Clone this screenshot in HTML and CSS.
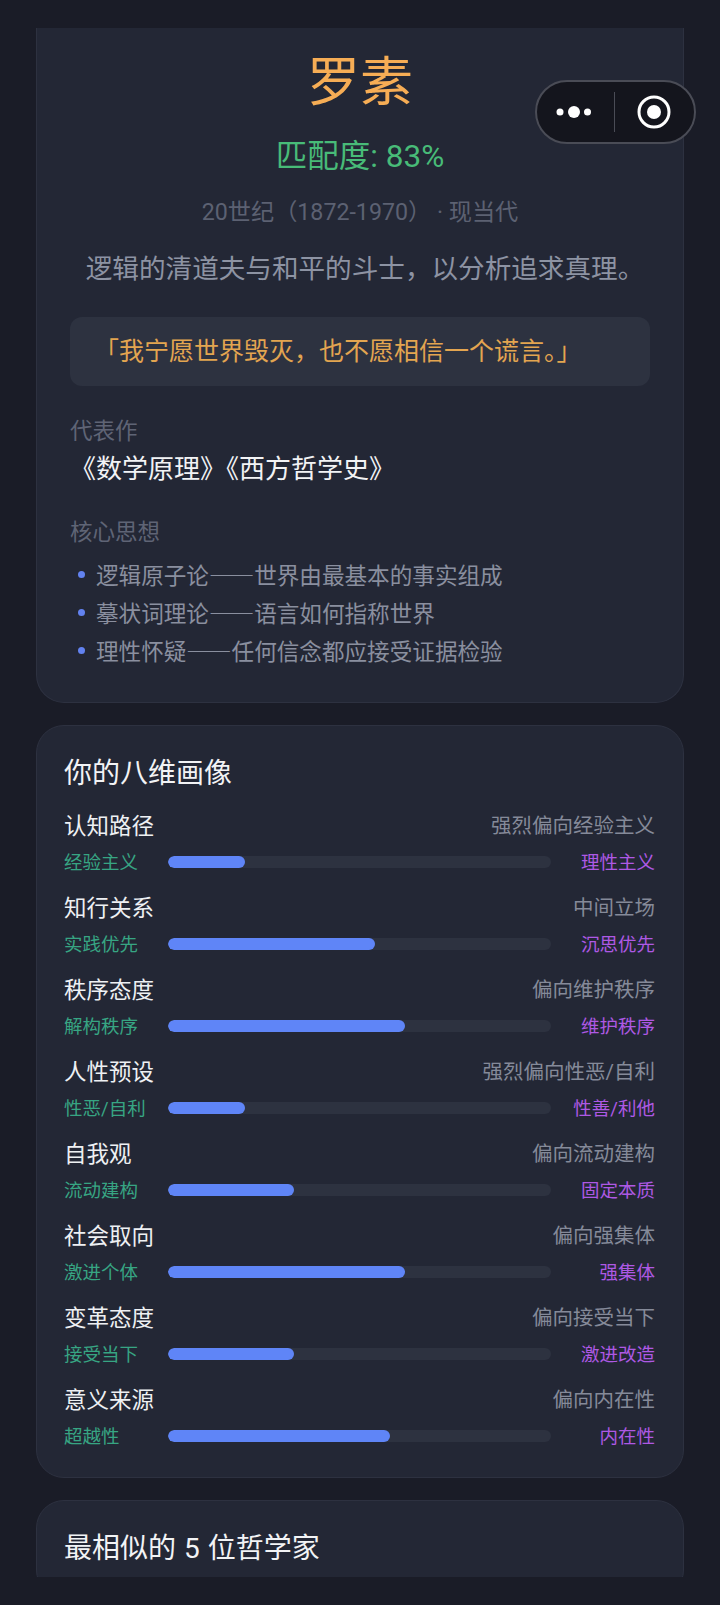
FILE: index.html
```html
<!DOCTYPE html>
<html lang="zh-CN">
<head>
  <meta charset="UTF-8">
  <title>罗素</title>
  <link rel="stylesheet" href="styles.css">
</head>
<body>
  <div id="page">
    <div id="scroller">
      <div class="card card--top">
        <div class="name">罗素</div>
        <div class="match">匹配度: 83%</div>
        <div class="meta">20世纪（1872-1970） · 现当代</div>
        <div class="tagline">逻辑的清道夫与和平的斗士，以分析追求真理。</div>
        <div class="quote">「我宁愿世界毁灭，也不愿相信一个谎言。」</div>
        <div class="sub sub--first">代表作</div>
        <div class="works">《数学原理》《西方哲学史》</div>
        <div class="sub">核心思想</div>
        <ul class="ideas">
          <li>逻辑原子论——世界由最基本的事实组成</li>
          <li>摹状词理论——语言如何指称世界</li>
          <li>理性怀疑——任何信念都应接受证据检验</li>
        </ul>
      </div>

      <div class="card">
        <div class="card-title">你的八维画像</div>
        <div class="dim">
          <div class="dim-head"><span class="dim-name">认知路径</span><span class="dim-value">强烈偏向经验主义</span></div>
          <div class="dim-bar">
            <span class="end-l">经验主义</span>
            <div class="track"><div class="fill" style="width: 20%"></div></div>
            <span class="end-r">理性主义</span>
          </div>
        </div>
        <div class="dim">
          <div class="dim-head"><span class="dim-name">知行关系</span><span class="dim-value">中间立场</span></div>
          <div class="dim-bar">
            <span class="end-l">实践优先</span>
            <div class="track"><div class="fill" style="width: 54%"></div></div>
            <span class="end-r">沉思优先</span>
          </div>
        </div>
        <div class="dim">
          <div class="dim-head"><span class="dim-name">秩序态度</span><span class="dim-value">偏向维护秩序</span></div>
          <div class="dim-bar">
            <span class="end-l">解构秩序</span>
            <div class="track"><div class="fill" style="width: 62%"></div></div>
            <span class="end-r">维护秩序</span>
          </div>
        </div>
        <div class="dim">
          <div class="dim-head"><span class="dim-name">人性预设</span><span class="dim-value">强烈偏向性恶/自利</span></div>
          <div class="dim-bar">
            <span class="end-l">性恶/自利</span>
            <div class="track"><div class="fill" style="width: 20%"></div></div>
            <span class="end-r">性善/利他</span>
          </div>
        </div>
        <div class="dim">
          <div class="dim-head"><span class="dim-name">自我观</span><span class="dim-value">偏向流动建构</span></div>
          <div class="dim-bar">
            <span class="end-l">流动建构</span>
            <div class="track"><div class="fill" style="width: 33%"></div></div>
            <span class="end-r">固定本质</span>
          </div>
        </div>
        <div class="dim">
          <div class="dim-head"><span class="dim-name">社会取向</span><span class="dim-value">偏向强集体</span></div>
          <div class="dim-bar">
            <span class="end-l">激进个体</span>
            <div class="track"><div class="fill" style="width: 62%"></div></div>
            <span class="end-r">强集体</span>
          </div>
        </div>
        <div class="dim">
          <div class="dim-head"><span class="dim-name">变革态度</span><span class="dim-value">偏向接受当下</span></div>
          <div class="dim-bar">
            <span class="end-l">接受当下</span>
            <div class="track"><div class="fill" style="width: 33%"></div></div>
            <span class="end-r">激进改造</span>
          </div>
        </div>
        <div class="dim">
          <div class="dim-head"><span class="dim-name">意义来源</span><span class="dim-value">偏向内在性</span></div>
          <div class="dim-bar">
            <span class="end-l">超越性</span>
            <div class="track"><div class="fill" style="width: 58%"></div></div>
            <span class="end-r">内在性</span>
          </div>
        </div>
      </div>

      <div class="card">
        <div class="card-title">最相似的 5 位哲学家</div>
      </div>
    </div>

    <div id="capsule">
      <svg class="capsule-more" width="42" height="14" viewBox="0 0 42 14">
        <circle cx="7" cy="7" r="3.5" fill="#fff"/>
        <circle cx="21" cy="7" r="6" fill="#fff"/>
        <circle cx="34.5" cy="7" r="3.5" fill="#fff"/>
      </svg>
      <div class="capsule-line"></div>
      <svg class="capsule-close" width="34" height="34" viewBox="0 0 34 34">
        <circle cx="17" cy="17" r="15" fill="none" stroke="#fff" stroke-width="3"/>
        <circle cx="17" cy="17" r="7" fill="#fff"/>
      </svg>
    </div>
  </div>
</body>
</html>
```

FILE: styles.css
```css
* {
  padding: 0;
  margin: 0;
  box-sizing: border-box;
}
body {
  background: #1a1c27;
  font-family: Roboto, "Noto Sans CJK SC", sans-serif;
  color: #fff;
}
#page {
  position: relative;
  height: 1605px;
  padding: 28px 36px;
  overflow: hidden;
}
#scroller {
  height: 1549px;
  overflow: hidden;
}
.card {
  background: #232735;
  border: 1px solid #2d3140;
  border-radius: 28px;
  padding: 28px 28px 28px 27px;
  margin-bottom: 22px;
}
.card--top {
  border-top: 0;
  border-radius: 0 0 28px 28px;
  padding: 19px 33px 31px;
  height: 675px;
}
.name {
  font-size: 53px;
  line-height: 72px;
  text-align: center;
  color: #f6ad55;
}
.match {
  margin-top: 16px;
  font-size: 31.5px;
  line-height: 44px;
  text-align: center;
  color: #48bb78;
}
.meta {
  margin-top: 16px;
  font-size: 23.2px;
  line-height: 34px;
  text-align: center;
  color: #5c6172;
}
.tagline {
  margin-top: 20px;
  padding-left: 10px;
  font-size: 26.6px;
  line-height: 40px;
  text-align: center;
  color: #8d93a3;
}
.quote {
  margin-top: 28px;
  height: 69px;
  background: #2d3240;
  border-radius: 12px;
  font-size: 25px;
  line-height: 69px;
  padding-left: 24px;
  color: #e3a550;
}
.sub {
  margin-top: 29px;
  font-size: 22.5px;
  line-height: 32px;
  color: #5f6475;
}
.sub--first {
  margin-top: 29px;
}
.works {
  margin-top: 4px;
  font-size: 26px;
  line-height: 36px;
  color: #f2f3f5;
}
.ideas {
  margin-top: 8px;
  list-style: none;
  font-family: "Noto Sans CJK SC", sans-serif;
  font-size: 22.6px;
  line-height: 38px;
  color: #8a8f9f;
}
.ideas li {
  position: relative;
  padding-left: 26px;
}
.ideas li::before {
  content: "";
  position: absolute;
  left: 8px;
  top: 15px;
  width: 7px;
  height: 7px;
  border-radius: 50%;
  background: #6282f0;
}
.card-title {
  font-size: 28px;
  line-height: 40px;
  word-spacing: 1px;
  color: #f2f3f5;
}
.dim {
  margin-top: 15px;
}
.dim + .dim {
  margin-top: 16px;
}
.dim-head {
  display: flex;
  justify-content: space-between;
  align-items: center;
  height: 30px;
}
.dim-name {
  font-size: 22.5px;
  color: #eef0f3;
}
.dim-value {
  font-size: 20.5px;
  color: #858a99;
}
.dim-bar {
  display: grid;
  grid-template-columns: 104px 1fr 104px;
  align-items: center;
  margin-top: 10px;
  height: 26px;
  font-size: 18.5px;
}
.end-l {
  margin-top: -2px;
  color: #37a583;
}
.end-r {
  margin-top: -2px;
  color: #ae59e4;
  text-align: right;
}
.track {
  height: 12px;
  border-radius: 6px;
  background: #2d3240;
  overflow: hidden;
}
.fill {
  height: 100%;
  border-radius: 6px;
  background: #5f85f7;
}
#capsule {
  position: absolute;
  top: 80px;
  left: 534.5px;
  width: 161px;
  height: 64px;
  display: flex;
  align-items: center;
  background: #14151d;
  border: 2px solid #4a4c56;
  border-radius: 32px;
}
.capsule-more {
  margin-left: 16px;
}
.capsule-line {
  margin-left: 19px;
  width: 1.5px;
  height: 40px;
  background: #4a4c56;
}
.capsule-close {
  margin-left: 22px;
}
```
